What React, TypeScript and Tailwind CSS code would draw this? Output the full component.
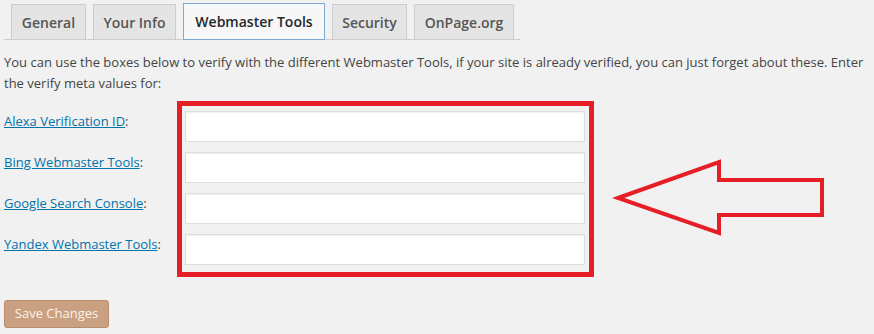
import React from 'react';

const tabs = [
  { label: 'General', w: 'w-[75px]' },
  { label: 'Your Info', w: 'w-[83px]' },
  { label: 'Webmaster Tools', w: 'w-[142px]' },
  { label: 'Security', w: 'w-[75px]' },
  { label: 'OnPage.org', w: 'w-[100px]' },
];
const active = 'Webmaster Tools';

const fields = [
  'Alexa Verification ID',
  'Bing Webmaster Tools',
  'Google Search Console',
  'Yandex Webmaster Tools',
];

export default function App() {
  return (
    <div
      className="relative w-[874px] h-[334px] overflow-hidden bg-[#f1f1f1] text-[#444] text-[13px]"
      style={{ fontFamily: '"Open Sans", "Liberation Sans", sans-serif' }}
    >
      <div className="pl-[4px]">
        {/* tabs */}
        <div className="flex items-end gap-[7px] w-[516px] h-[40px] pl-[7px] border-b border-[#ccc]">
          {tabs.map((t) =>
            t.label === active ? (
              <div
                key={t.label}
                className={`${t.w} shrink-0 whitespace-nowrap h-[37px] -mb-px flex items-center justify-center bg-[#f7f7f7] border border-[#7fa9d3] text-[#23282d] text-[14px] font-semibold`}
              >
                {t.label}
              </div>
            ) : (
              <div
                key={t.label}
                className={`${t.w} shrink-0 whitespace-nowrap h-[35px] flex items-center justify-center bg-[#e4e4e4] border border-b-0 border-[#ccc] text-[#555] text-[14px] font-semibold`}
              >
                {t.label}
              </div>
            )
          )}
        </div>

        <p className="mt-[12px] pr-[6px] leading-[21px]">
          You can use the boxes below to verify with the different Webmaster Tools, if your site is already verified, you can just forget about these. Enter the verify meta values for:
        </p>

        {/* fields */}
        <div className="mt-[17px] flex flex-col gap-[10px]">
          {fields.map((f) => (
            <div key={f} className="flex items-start">
              <label className="w-[181px] leading-[21px]">
                <a href="#" className="text-[#0073aa] underline">
                  {f}
                </a>
                :
              </label>
              <input
                type="text"
                className="w-[400px] h-[31px] bg-white border border-[#ddd] shadow-[inset_0_1px_2px_rgba(0,0,0,0.07)]"
              />
            </div>
          ))}
        </div>

        <button
          type="button"
          className="mt-[35px] h-[28px] w-[105px] rounded-[3px] bg-[#c9a081] border border-[#b88d6c] text-[#fdf3ea] text-[13px]"
        >
          Save Changes
        </button>
      </div>

      {/* annotation */}
      <div className="absolute left-[177px] top-[101px] w-[417px] h-[176px] border-[5px] border-[#e61e28]" />
      <svg
        className="absolute left-[612px] top-[156px]"
        width="216"
        height="84"
        viewBox="0 0 216 84"
        fill="none"
      >
        <polygon
          points="6,42 107,6 107,24 210,24 210,59 107,59 107,77"
          stroke="#e61e28"
          strokeWidth="4"
          strokeLinejoin="miter"
        />
      </svg>
    </div>
  );
}
